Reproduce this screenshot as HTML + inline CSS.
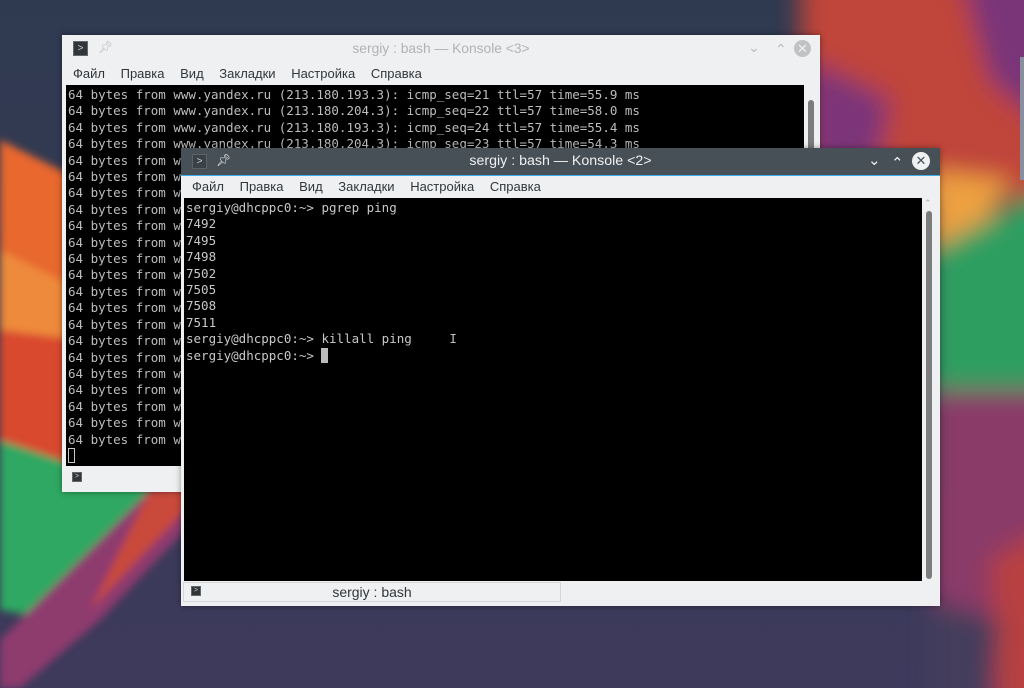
<!DOCTYPE html>
<html><head><meta charset="utf-8"><style>
*{margin:0;padding:0;box-sizing:border-box}
body{width:1024px;height:688px;overflow:hidden;position:relative;background:#3b3a58;font-family:"Liberation Sans","DejaVu Sans",sans-serif}
#bg{position:absolute;left:0;top:0}
.win{position:absolute;background:#eff0f1;box-shadow:0 0 6px rgba(0,0,0,.4)}
.title{position:absolute;left:0;right:0;top:0;height:27px;font-size:14.2px;text-align:center;line-height:27px}
.menu{position:absolute;left:0;top:28px;height:22px;font-size:13px;color:#31363b;line-height:22px}
.menu span{margin-left:11px;margin-right:1px}
.term{position:absolute;background:#000;color:#c8c8c8;font-family:"DejaVu Sans Mono","Liberation Mono",monospace;font-size:12.5px;line-height:16.4px;white-space:pre;overflow:hidden;padding-left:2px;padding-top:2px}
.ic{position:absolute;width:15px;height:15px;background:#31363b;border:1px solid #666;color:#ccc;font-size:10px;line-height:13px;text-align:center}
.thumb{position:absolute;background:#7b7c7e;border-radius:4px;width:6px}
</style></head><body>
<svg id="bg" width="1024" height="688">
<defs><filter id="b"><feGaussianBlur stdDeviation="12"/></filter><filter id="b2"><feGaussianBlur stdDeviation="4"/></filter>
<linearGradient id="tp" x1="0" y1="0" x2="0" y2="1"><stop offset="0" stop-color="#2f3a50"/><stop offset="1" stop-color="#3e3a5c"/></linearGradient></defs>
<rect width="1024" height="688" fill="url(#tp)"/>
<g filter="url(#b2)">
<polygon points="0,140 80,180 80,470 0,460" fill="#d9482e"/>
<polygon points="0,140 80,180 80,340 0,300" fill="#e8672f"/>
<polygon points="0,250 80,290 80,340 0,330" fill="#ee8a3a"/>
<polygon points="0,440 150,490 60,620 0,610" fill="#2fa862"/>
<polygon points="150,490 195,470 195,520 100,620 20,688 0,688 0,640" fill="#8e3a6e"/>
<polygon points="150,490 195,480 195,500 90,610" fill="#c94a3a"/>
</g>
<g filter="url(#b)">
<rect x="800" y="-30" width="260" height="230" fill="#c0443a"/>
<polygon points="960,-30 1060,-30 1060,140 990,80" fill="#7a3578"/>
<polygon points="810,60 890,100 870,200 810,190" fill="#7b3578"/>
<polygon points="930,170 1010,180 970,260 930,270" fill="#eea040"/>
<polygon points="930,250 1060,180 1060,390 930,390" fill="#2e9e60"/>
<polygon points="930,390 1060,390 1060,720 930,720" fill="#8a3a68"/>
<polygon points="990,560 1060,520 1060,720 1000,720" fill="#b84040"/>
<polygon points="930,600 1000,620 990,720 930,720" fill="#453c5c"/>
</g>
<rect x="1020" y="57" width="4" height="123" fill="#8a8fa0"/>
</svg>

<div class="win" style="left:62px;top:35px;width:758px;height:457px">
 <div class="title" style="color:#b0b3b6;font-size:13.8px">sergiy : bash — Konsole &lt;3&gt;</div>
 <div class="ic" style="left:11px;top:6px">&gt;</div>
 <div style="position:absolute;left:36px;top:5px;color:#bbb;font-size:12px">&#x1F4CC;&#xFE0E;</div>
 <div style="position:absolute;left:686px;top:4px;color:#bbb;font-size:14px">&#x2304;</div>
 <div style="position:absolute;left:713px;top:6px;color:#bbb;font-size:14px">&#x2303;</div>
 <div style="position:absolute;left:732px;top:5px;width:17px;height:17px;border-radius:50%;background:#c0c2c4;color:#eff0f1;font-size:13px;line-height:17px;text-align:center">✕</div>
 <div class="menu"><span>Файл</span> <span>Правка</span> <span>Вид</span> <span>Закладки</span> <span>Настройка</span> <span>Справка</span></div>
 <div class="term" style="left:4px;top:50px;width:738px;height:381px;color:#bdbdbd">64 bytes from www.yandex.ru (213.180.193.3): icmp_seq=21 ttl=57 time=55.9 ms
64 bytes from www.yandex.ru (213.180.204.3): icmp_seq=22 ttl=57 time=58.0 ms
64 bytes from www.yandex.ru (213.180.193.3): icmp_seq=24 ttl=57 time=55.4 ms
64 bytes from www.yandex.ru (213.180.204.3): icmp_seq=23 ttl=57 time=54.3 ms
64 bytes from www
64 bytes from www
64 bytes from www
64 bytes from www
64 bytes from www
64 bytes from www
64 bytes from www
64 bytes from www
64 bytes from www
64 bytes from www
64 bytes from www
64 bytes from www
64 bytes from www
64 bytes from www
64 bytes from www
64 bytes from www
64 bytes from www
64 bytes from www
<span style="display:inline-block;width:7px;height:15px;border:1px solid #c8c8c8;vertical-align:-3px"></span></div>
 <div class="thumb" style="left:746px;top:65px;height:60px"></div>
 <div class="ic" style="left:10px;top:437px;width:10px;height:10px;font-size:7px;line-height:8px">&gt;</div>
</div>

<div class="win" style="left:181px;top:148px;width:759px;height:458px">
 <div class="title" style="background:#475057;color:#eff0f1;border-bottom:1px solid #3daee9;height:28px">sergiy : bash — Konsole &lt;2&gt;</div>
 <div class="ic" style="left:11px;top:6px;border-color:#5a636a;background:#3a4248">&gt;</div>
 <div style="position:absolute;left:35px;top:5px;color:#eff0f1;font-size:12px">&#x1F4CC;&#xFE0E;</div>
 <div style="position:absolute;left:687px;top:3px;color:#eff0f1;font-size:15px">&#x2304;</div>
 <div style="position:absolute;left:710px;top:6px;color:#eff0f1;font-size:15px">&#x2303;</div>
 <div style="position:absolute;left:731px;top:4px;width:18px;height:18px;border-radius:50%;background:#eff0f1;color:#475057;font-size:13px;line-height:18px;text-align:center;font-weight:bold">✕</div>
 <div class="menu" style="top:28px"><span>Файл</span> <span>Правка</span> <span>Вид</span> <span>Закладки</span> <span>Настройка</span> <span>Справка</span></div>
 <div class="term" style="left:3px;top:50px;width:738px;height:383px">sergiy@dhcppc0:~&gt; pgrep ping
7492
7495
7498
7502
7505
7508
7511
sergiy@dhcppc0:~&gt; killall ping     <span style="color:#bbb">I</span>
sergiy@dhcppc0:~&gt; <span style="display:inline-block;width:7px;height:15px;background:#bbb;vertical-align:-3px"></span></div>
 <div class="thumb" style="left:745px;top:63px;height:368px"></div>
 <div style="position:absolute;left:743px;top:50px;color:#aaa;font-size:9px">&#x2303;</div>
 <div style="position:absolute;left:2px;top:434px;width:378px;height:20px;border:1px solid #d5d6d7;background:#eff0f1;text-align:center;font-size:14px;line-height:19px;color:#31363b">sergiy : bash</div>
 <div class="ic" style="left:10px;top:438px;width:10px;height:10px;font-size:7px;line-height:8px">&gt;</div>
</div>
</body></html>
